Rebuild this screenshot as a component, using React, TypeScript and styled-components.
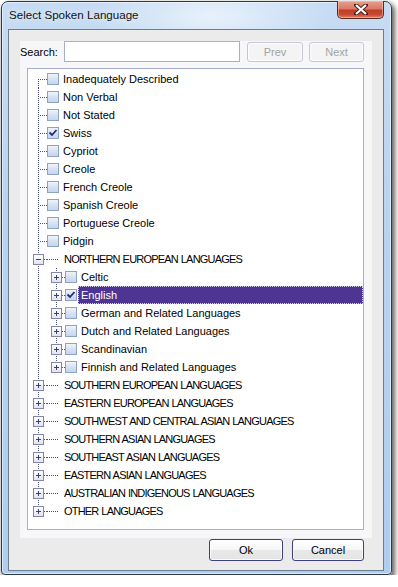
import styled, { createGlobalStyle } from "styled-components";

const GlobalStyle = createGlobalStyle`
  html, body {
    margin: 0;
    padding: 0;
    background: #ffffff;
  }
  body {
    font-family: "Liberation Sans", Arial, sans-serif;
    font-size: 11px;
    color: #000;
  }
`;

type Item = {
  label: string;
  level: number;
  box?: boolean;
  checked?: boolean;
  selected?: boolean;
  toggle?: "plus" | "minus";
};

const rows: Item[] = [
  { label: "Inadequately Described", level: 0, box: true },
  { label: "Non Verbal", level: 0, box: true },
  { label: "Not Stated", level: 0, box: true },
  { label: "Swiss", level: 0, box: true, checked: true },
  { label: "Cypriot", level: 0, box: true },
  { label: "Creole", level: 0, box: true },
  { label: "French Creole", level: 0, box: true },
  { label: "Spanish Creole", level: 0, box: true },
  { label: "Portuguese Creole", level: 0, box: true },
  { label: "Pidgin", level: 0, box: true },
  { label: "NORTHERN EUROPEAN LANGUAGES", level: 0, toggle: "minus" },
  { label: "Celtic", level: 1, box: true, toggle: "plus" },
  { label: "English", level: 1, box: true, toggle: "plus", checked: true, selected: true },
  { label: "German and Related Languages", level: 1, box: true, toggle: "plus" },
  { label: "Dutch and Related Languages", level: 1, box: true, toggle: "plus" },
  { label: "Scandinavian", level: 1, box: true, toggle: "plus" },
  { label: "Finnish and Related Languages", level: 1, box: true, toggle: "plus" },
  { label: "SOUTHERN EUROPEAN LANGUAGES", level: 0, toggle: "plus" },
  { label: "EASTERN EUROPEAN LANGUAGES", level: 0, toggle: "plus" },
  { label: "SOUTHWEST AND CENTRAL ASIAN LANGUAGES", level: 0, toggle: "plus" },
  { label: "SOUTHERN ASIAN LANGUAGES", level: 0, toggle: "plus" },
  { label: "SOUTHEAST ASIAN LANGUAGES", level: 0, toggle: "plus" },
  { label: "EASTERN ASIAN LANGUAGES", level: 0, toggle: "plus" },
  { label: "AUSTRALIAN INDIGENOUS LANGUAGES", level: 0, toggle: "plus" },
  { label: "OTHER LANGUAGES", level: 0, toggle: "plus" },
];

const isLast = (i: number) => {
  const level = rows[i].level;
  for (let j = i + 1; j < rows.length; j++) {
    if (rows[j].level < level) return true;
    if (rows[j].level === level) return false;
  }
  return true;
};

const pipeAt = (i: number, level: number) => {
  for (let j = i - 1; j >= 0; j--) {
    if (rows[j].level === level) return !isLast(j);
  }
  return false;
};

const DOT = "#4b4b8c";
const vDots = `repeating-linear-gradient(to bottom, ${DOT} 0 1px, transparent 1px 2px)`;
const hDots = `repeating-linear-gradient(to right, ${DOT} 0 1px, transparent 1px 2px)`;

const Window = styled.div`
  box-sizing: border-box;
  width: 391px;
  height: 574px;
  margin: 1px 0 0 1px;
  border: 1px solid #2f3946;
  border-radius: 7px 7px 4px 4px;
  padding: 0 7px 3px 6px;
  display: flex;
  flex-direction: column;
  background:
    radial-gradient(ellipse 120px 40px at 210px 14px, rgba(236, 244, 252, 0.9), rgba(236, 244, 252, 0) 100%),
    linear-gradient(to bottom, #c6dcf3 0%, #b8d3f0 40%, #aecdef 100%);
  box-shadow: 2px 3px 5px 1px rgba(0, 0, 0, 0.6), inset 0 0 0 1px rgba(255, 255, 255, 0.55);
`;

const TitleBar = styled.div`
  height: 27px;
  display: flex;
  align-items: flex-start;
  justify-content: space-between;
`;

const Title = styled.div`
  padding: 6px 0 0 1px;
  font-family: "Liberation Sans", Arial, sans-serif;
  font-size: 11.6px;
  color: #111;
  text-shadow: 0 0 6px rgba(255, 255, 255, 0.95);
`;

const CloseButton = styled.div`
  box-sizing: border-box;
  width: 47px;
  height: 18px;
  margin-top: -1px;
  border: 1px solid #5b2a22;
  border-top: none;
  border-radius: 0 0 5px 5px;
  display: flex;
  align-items: center;
  justify-content: center;
  background: linear-gradient(to bottom, #e7a08f 0%, #d87a64 45%, #c13d26 55%, #c64b33 80%, #de8466 100%);
  box-shadow: inset 0 0 0 1px rgba(255, 200, 190, 0.5);
`;

const Client = styled.div`
  flex: 1;
  border: 1px solid #6d7c8e;
  background: #ebebeb;
  padding: 11px 11px 0;
  display: flex;
  flex-direction: column;
`;

const Panel = styled.div`
  background: #f7f7fa;
  padding: 0 8px 8px 7px;
  display: flex;
  flex-direction: column;
  gap: 6px;
`;

const SearchRow = styled.div`
  display: flex;
  align-items: center;
  height: 21px;
  margin-left: -7px;
`;

const SearchLabel = styled.span`
  width: 44px;
  font-size: 11px;
`;

const SearchInput = styled.div`
  box-sizing: border-box;
  width: 176px;
  height: 21px;
  border: 1px solid #a9afd0;
  background: #fff;
`;

const Button = styled.div<{ $disabled?: boolean; $width: number }>`
  box-sizing: border-box;
  width: ${(p) => p.$width}px;
  height: ${(p) => (p.$disabled ? 20 : 22)}px;
  display: flex;
  align-items: center;
  justify-content: center;
  border: 1px solid ${(p) => (p.$disabled ? "#c3c6d6" : "#3f3d83")};
  border-radius: 3px;
  font-size: 11px;
  color: ${(p) => (p.$disabled ? "#a3a3a3" : "#000")};
  background: ${(p) =>
    p.$disabled
      ? "#f4f4f4"
      : "linear-gradient(to bottom, #ffffff 0%, #f6f6f6 50%, #e9e9e9 51%, #e4e4e4 100%)"};
  box-shadow: inset 0 0 0 1px rgba(255, 255, 255, 0.8);
`;

const Tree = styled.div`
  box-sizing: border-box;
  height: 462px;
  border: 1px solid #a7aed2;
  background: #fff;
  padding: 1px 0 0 1px;
`;

const Row = styled.div`
  display: flex;
  height: 18px;
  align-items: stretch;
`;

const Guide = styled.div<{ $pipe: boolean }>`
  position: relative;
  width: 18px;
  flex: none;
  &::before {
    content: "";
    display: ${(p) => (p.$pipe ? "block" : "none")};
    position: absolute;
    left: 9px;
    top: 0;
    bottom: 0;
    width: 1px;
    background: ${vDots};
  }
`;

const Connector = styled.div<{ $up: boolean; $down: boolean }>`
  position: relative;
  width: 18px;
  flex: none;
  &::before {
    content: "";
    position: absolute;
    left: 9px;
    width: 1px;
    top: ${(p) => (p.$up ? 0 : 9)}px;
    bottom: ${(p) => (p.$down ? 0 : 9)}px;
    background: ${vDots};
  }
  &::after {
    content: "";
    position: absolute;
    left: 10px;
    right: 0;
    top: 9px;
    height: 1px;
    background: ${hDots};
    background-position: 1px 0;
  }
`;

const Toggle = styled.div`
  position: absolute;
  z-index: 1;
  left: 4px;
  top: 4px;
  width: 11px;
  height: 11px;
  box-sizing: border-box;
  border: 1px solid #8585aa;
  background: linear-gradient(to bottom, #ffffff 0%, #e3e3ee 100%);
  display: flex;
  align-items: center;
  justify-content: center;
`;

const Stub = styled.div`
  position: relative;
  width: 13px;
  flex: none;
  &::after {
    content: "";
    position: absolute;
    left: 0;
    right: 1px;
    top: 9px;
    height: 1px;
    background: ${hDots};
  }
`;

const CheckBox = styled.div`
  box-sizing: border-box;
  width: 12px;
  height: 12px;
  margin: 3px 0 0 0;
  flex: none;
  border: 1px solid #8ea3c3;
  background: linear-gradient(to bottom, #f0f4fa 0%, #d6e2f2 50%, #c6d6ec 100%);
  display: flex;
  align-items: center;
  justify-content: center;
`;

const Label = styled.div<{ $selected?: boolean; $caps?: boolean }>`
  box-sizing: border-box;
  margin-left: 1px;
  padding: 0 2px;
  line-height: 16px;
  white-space: nowrap;
  font-size: 11px;
  letter-spacing: ${(p) => (p.$caps ? "-0.8px" : "0")};
  word-spacing: ${(p) => (p.$caps ? "0.6px" : "0")};
  border: 1px ${(p) => (p.$selected ? "dotted #d8d0ee" : "solid transparent")};
  ${(p) => (p.$selected ? "flex: 1; background: #4e3594; color: #fff;" : "")}
`;

const Footer = styled.div`
  display: flex;
  justify-content: flex-end;
  gap: 9px;
  padding: 1px 8px 0 0;
`;

function Plus({ minus }: { minus?: boolean }) {
  return (
    <svg width="7" height="7" viewBox="0 0 7 7">
      <rect x="1" y="3" width="5" height="1" fill="#3c3c78" />
      {!minus && <rect x="3" y="1" width="1" height="5" fill="#3c3c78" />}
    </svg>
  );
}

function Check() {
  return (
    <svg width="10" height="10" viewBox="0 0 10 10">
      <path d="M1.5 4.5 L4 7 L8.5 2" fill="none" stroke="#25268a" strokeWidth="1.8" />
    </svg>
  );
}

function TreeRow({ item, index }: { item: Item; index: number }) {
  const guides = [];
  for (let k = 0; k < item.level; k++) {
    guides.push(<Guide key={k} $pipe={pipeAt(index, k)} />);
  }
  return (
    <Row>
      {guides}
      <Connector $up={index > 0} $down={!isLast(index)}>
        {item.toggle && (
          <Toggle>
            <Plus minus={item.toggle === "minus"} />
          </Toggle>
        )}
      </Connector>
      {item.box ? <CheckBox>{item.checked && <Check />}</CheckBox> : <Stub />}
      <Label $selected={item.selected} $caps={!item.box}>
        {item.label}
      </Label>
    </Row>
  );
}

export default function App() {
  return (
    <>
      <GlobalStyle />
      <Window>
        <TitleBar>
          <Title>Select Spoken Language</Title>
          <CloseButton>
            <svg width="14" height="11" viewBox="0 0 14 11">
              <path
                d="M2 1 L12 10 M12 1 L2 10"
                stroke="#4a1e18"
                strokeWidth="4"
                strokeLinecap="square"
              />
              <path d="M2 1 L12 10 M12 1 L2 10" stroke="#fff" strokeWidth="2.2" />
            </svg>
          </CloseButton>
        </TitleBar>
        <Client>
          <Panel>
            <SearchRow>
              <SearchLabel>Search:</SearchLabel>
              <SearchInput />
              <Button $disabled $width={56} style={{ marginLeft: 7 }}>
                Prev
              </Button>
              <Button $disabled $width={55} style={{ marginLeft: 6 }}>
                Next
              </Button>
            </SearchRow>
            <Tree>
              {rows.map((item, i) => (
                <TreeRow key={item.label} item={item} index={i} />
              ))}
            </Tree>
          </Panel>
          <Footer>
            <Button $width={74}>Ok</Button>
            <Button $width={72}>Cancel</Button>
          </Footer>
        </Client>
      </Window>
    </>
  );
}
